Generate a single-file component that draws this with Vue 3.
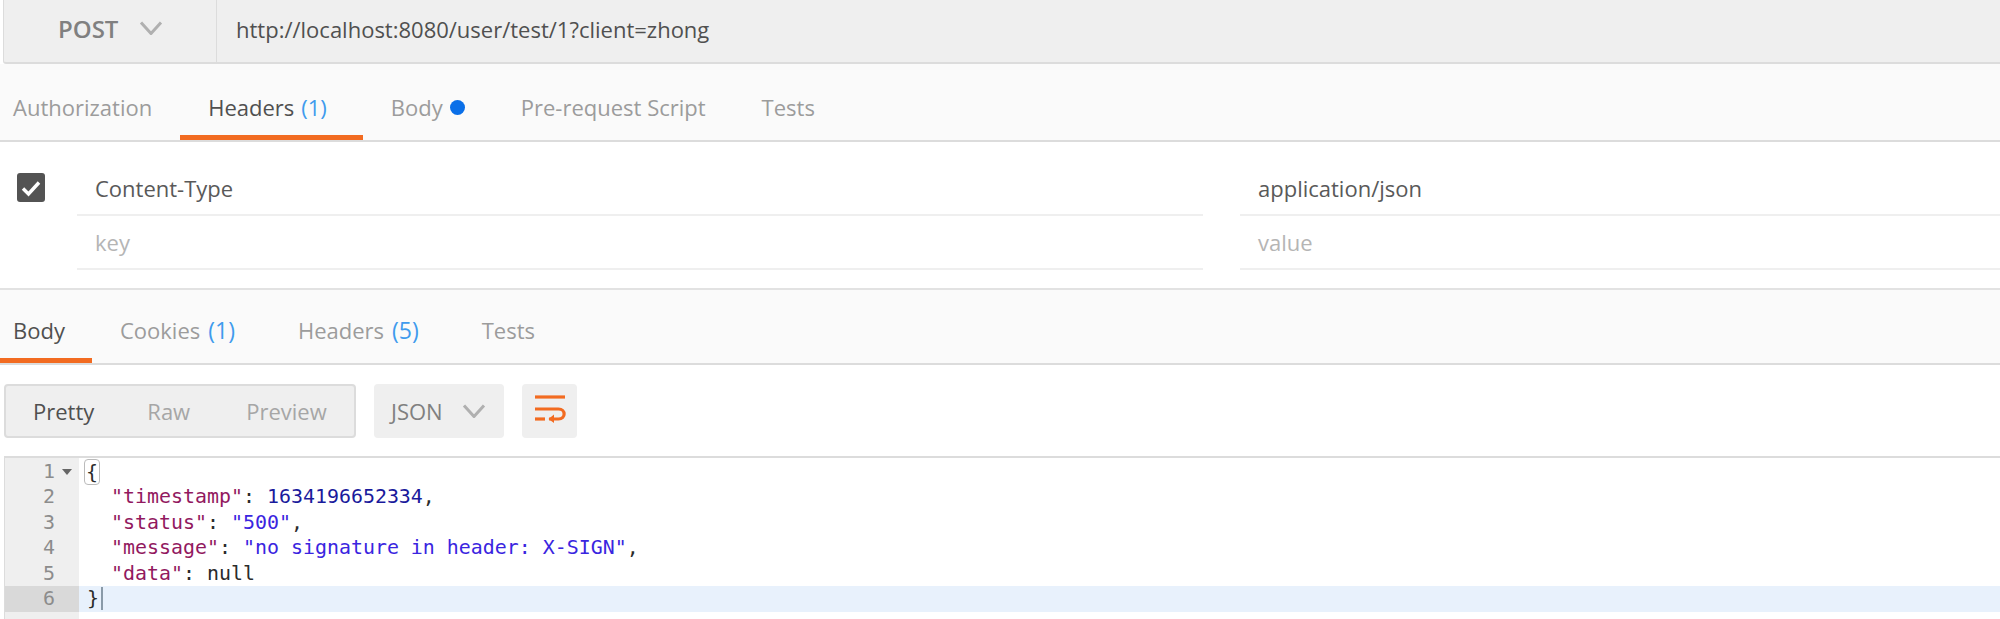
<script setup>
const requestTabs = [
  { label: 'Authorization' },
  { label: 'Headers', count: '(1)', active: true },
  { label: 'Body', dot: true },
  { label: 'Pre-request Script' },
  { label: 'Tests' },
]
const responseTabs = [
  { label: 'Body', active: true },
  { label: 'Cookies', count: '(1)' },
  { label: 'Headers', count: '(5)' },
  { label: 'Tests' },
]
const lineNumbers = [1, 2, 3, 4, 5, 6]
</script>

<template>
  <div class="page">
    <header class="request-bar">
      <div class="method">
        <span>POST</span>
        <svg class="chev" width="24" height="14" viewBox="0 0 24 14"><path d="M2 1.5 12 12.5 22 1.5" /></svg>
      </div>
      <div class="url">http://localhost:8080/user/test/1?client=zhong</div>
    </header>

    <nav class="tabs req-tabs">
      <div v-for="t in requestTabs" :key="t.label" class="tab" :class="{ active: t.active }">
        {{ t.label }}<span v-if="t.count" class="count">{{ t.count }}</span><i v-if="t.dot" class="dot"></i>
      </div>
    </nav>

    <section class="headers">
      <div class="row">
        <div class="check">
          <svg width="28" height="29" viewBox="0 0 28 29"><rect width="28" height="29" rx="3" fill="#535353" /><path d="M6 15.5 11.5 21 22 9.5" fill="none" stroke="#fff" stroke-width="3.4" /></svg>
        </div>
        <div class="cell key">Content-Type</div>
        <div class="cell val">application/json</div>
      </div>
      <div class="row">
        <div class="check"></div>
        <div class="cell key ph">key</div>
        <div class="cell val ph">value</div>
      </div>
    </section>

    <nav class="tabs res-tabs">
      <div v-for="t in responseTabs" :key="t.label" class="tab" :class="{ active: t.active }">
        {{ t.label }}<span v-if="t.count" class="count">{{ t.count }}</span>
      </div>
    </nav>

    <div class="toolbar">
      <div class="modes">
        <span class="mode on">Pretty</span>
        <span class="mode">Raw</span>
        <span class="mode last">Preview</span>
      </div>
      <div class="lang">
        <span>JSON</span>
        <svg class="chev" width="24" height="14" viewBox="0 0 24 14"><path d="M2 1.5 12 12.5 22 1.5" /></svg>
      </div>
      <div class="wrap">
        <svg width="32" height="28" viewBox="0 0 32 28" fill="none" stroke="#f26b21" stroke-width="3.2">
          <path d="M1 2H31" />
          <path d="M1 14H24.5C32 14 32 24 24.5 24H15" />
          <path d="M1 24H11" />
          <path d="M20 19.5 14.5 24 20 28" fill="#f26b21" stroke="none" />
        </svg>
      </div>
    </div>

    <div class="editor">
      <div class="gutter">
        <div v-for="n in lineNumbers" :key="n" class="ln" :class="{ cur: n === 6 }">
          {{ n }}<i v-if="n === 1" class="fold"></i>
        </div>
      </div>
      <div class="code">
        <div class="line"><span class="brace">{</span></div>
        <div class="line indent"><span class="k">"timestamp"</span>: <span class="n">1634196652334</span>,</div>
        <div class="line indent"><span class="k">"status"</span>: <span class="s">"500"</span>,</div>
        <div class="line indent"><span class="k">"message"</span>: <span class="s">"no signature in header: X-SIGN"</span>,</div>
        <div class="line indent"><span class="k">"data"</span>: null</div>
        <div class="line cur"><span class="close">}</span></div>
      </div>
    </div>
  </div>
</template>

<style>
html, body { margin: 0; background: #fff; overflow: hidden; }
</style>

<style scoped>
.page {
  width: 2000px;
  height: 619px;
  overflow: hidden;
  font-family: "Open Sans", sans-serif;
  font-size: 22px;
  color: #808080;
  background: #fff;
}
.request-bar {
  display: flex;
  height: 64px;
  box-sizing: border-box;
  margin-left: 3px;
  background: #efefef;
  border-left: 1px solid #dcdcdc;
  border-bottom: 2px solid #dcdcdc;
  border-bottom-left-radius: 3px;
}
.method {
  display: flex;
  align-items: center;
  gap: 21px;
  width: 213px;
  padding: 0 0 6px 54px;
  box-sizing: border-box;
  border-right: 1px solid #dcdcdc;
  font-weight: 600;
  font-size: 24px;
  color: #808080;
}
.chev { fill: none; stroke: #b0b0b0; stroke-width: 3; flex: none; }
.url {
  display: flex;
  align-items: center;
  padding: 0 0 5px 19px;
  color: #505050;
}
.tabs {
  display: flex;
  background: #fafafa;
  border-bottom: 2px solid #dcdcdc;
  box-sizing: border-box;
}
.req-tabs { height: 78px; }
.res-tabs { height: 77px; border-top: 2px solid #e2e2e2; }
.tab {
  display: flex;
  align-items: center;
  padding: 15px 28px 0;
  border-bottom: 5px solid transparent;
  color: #9c9c9c;
  white-space: pre;
}
.res-tabs .tab { padding-top: 11px; }
.tab:first-child { margin-left: -15px; }
.res-tabs .tab:first-child { padding-right: 27px; }
.tab.active { color: #505050; border-bottom-color: #f26b21; }
.count { color: #3f9bed; font-size: 23px; margin-left: 8px; padding-right: 7px; }
.req-tabs .count { font-size: 22px; margin-left: 7px; padding-right: 8px; }
.dot {
  display: block;
  width: 15px;
  height: 15px;
  margin-left: 7px;
  border-radius: 50%;
  background: #0a6fe8;
}
.headers { height: 146px; box-sizing: border-box; padding-top: 20px; }
.row {
  display: flex;
  height: 54px;
}
.check { width: 77px; flex: none; padding: 11px 0 0 17px; box-sizing: border-box; }
.check svg { display: block; }
.cell {
  display: flex;
  align-items: center;
  box-sizing: border-box;
  border-bottom: 2px solid #efefef;
  padding: 0 0 1px 18px;
  color: #595959;
}
.key { width: 1126px; }
.val { flex: 1; margin-left: 37px; }
.ph { color: #b5b5b5; }
.toolbar {
  display: flex;
  gap: 18px;
  height: 91px;
  box-sizing: border-box;
  padding: 19px 0 0 4px;
}
.modes, .lang, .wrap {
  height: 54px;
  box-sizing: border-box;
  display: flex;
  align-items: center;
  background: #efefef;
  border-radius: 4px;
}
.modes {
  width: 352px;
  border: 2px solid #dcdcdc;
  padding-left: 27px;
  gap: 53px;
}
.mode { color: #a6a6a6; }
.mode.on { color: #505050; }
.mode.last { margin-left: 3px; }
.lang { width: 130px; padding-left: 17px; gap: 19px; color: #808080; }
.wrap { width: 55px; justify-content: center; }
.wrap svg { margin-bottom: 4px; }
.editor {
  display: flex;
  height: 163px;
  margin-left: 4px;
  border-top: 2px solid #dcdcdc;
  box-sizing: border-box;
  font-family: "DejaVu Sans Mono", monospace;
  font-size: 19.93px;
  line-height: 25.6px;
}
.gutter {
  width: 75px;
  flex: none;
  background: #efefef;
  color: #8c8c8c;
  border-left: 1px solid #dcdcdc;
  padding-top: 0.5px;
  box-sizing: border-box;
}
.ln {
  position: relative;
  height: 25.6px;
  padding-left: 38px;
}
.ln.cur { background: #d9d9d9; }
.fold {
  position: absolute;
  left: 57px;
  top: 10px;
  width: 0;
  height: 0;
  border: 5px solid transparent;
  border-top: 6px solid #666;
  border-bottom: 0;
}
.code { flex: 1; padding-top: 0.5px; color: #2b2b2b; white-space: pre; }
.line { height: 25.6px; padding-left: 8px; }
.line.indent { padding-left: 32px; }
.line.cur { background: #e8f1fc; }
.brace {
  display: inline-block;
  width: 12px;
  height: 24px;
  margin-left: -3px;
  padding: 0 1px;
  border: 1px solid #bbb;
  border-radius: 4px;
  box-sizing: content-box;
}
.close { border-right: 2px solid #8a9aa8; padding-right: 2px; }
.k { color: #92195f; }
.n { color: #1a1a9c; }
.s { color: #3a25e0; }
</style>
